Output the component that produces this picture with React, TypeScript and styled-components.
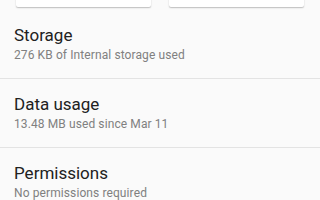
import React from 'react';
import styled, { createGlobalStyle } from 'styled-components';

const GlobalStyle = createGlobalStyle`
  html, body {
    margin: 0;
    padding: 0;
    background: #fafafa;
  }
  body {
    font-family: Roboto, "Liberation Sans", sans-serif;
    -webkit-font-smoothing: antialiased;
  }
`;

const Screen = styled.div`
  width: 320px;
  height: 200px;
  overflow: hidden;
  background: #fafafa;
`;

// top of the action buttons is scrolled out of view
const ButtonBar = styled.div`
  display: flex;
  gap: 18px;
  padding: 0 16px 3px;
  margin-top: -29px;
`;

const ActionButton = styled.button`
  flex: 1;
  height: 36px;
  background: #ffffff;
  border: none;
  border-radius: 2px;
  box-shadow: 0 1px 1px rgba(0, 0, 0, 0.14), 0 1px 2px rgba(0, 0, 0, 0.12);
`;

const PrefRow = styled.div<{ $divider?: boolean }>`
  padding: 14px 14px;
  border-top: ${({ $divider }) => ($divider ? '1px solid #e3e3e3' : 'none')};
`;

const Title = styled.div`
  font-size: 17px;
  line-height: 22px;
  color: #212121;
`;

const Summary = styled.div`
  font-size: 12px;
  line-height: 18px;
  letter-spacing: 0.1px;
  color: #808080;
`;

const prefs = [
  { title: 'Storage', summary: '276 KB of Internal storage used' },
  { title: 'Data usage', summary: '13.48 MB used since Mar 11' },
  { title: 'Permissions', summary: 'No permissions required' },
];

export default function App() {
  return (
    <Screen>
      <GlobalStyle />
      <ButtonBar>
        <ActionButton aria-label="Uninstall" />
        <ActionButton aria-label="Force stop" />
      </ButtonBar>
      {prefs.map((p, i) => (
        <PrefRow key={p.title} $divider={i > 0}>
          <Title>{p.title}</Title>
          <Summary>{p.summary}</Summary>
        </PrefRow>
      ))}
    </Screen>
  );
}
